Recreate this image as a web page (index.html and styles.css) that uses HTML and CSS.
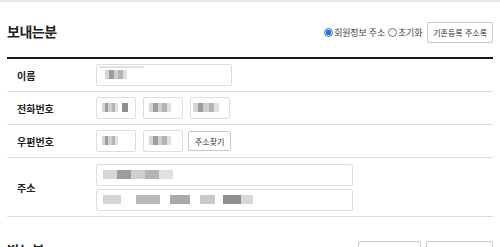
FILE: index.html
```html
<!DOCTYPE html>
<html lang="ko">
<head>
  <meta charset="UTF-8">
  <meta name="viewport" content="width=device-width, initial-scale=1.0">
  <title>주문서 작성</title>
  <link rel="stylesheet" href="styles.css">
</head>
<body>
  <div class="topbar"></div>
  <div class="container">

    <!-- 보내는분 -->
    <div class="section-head">
      <h2>보내는분</h2>
      <div class="head-tools">
        <label class="radio"><input type="radio" name="sender_addr" checked>회원정보 주소</label>
        <label class="radio"><input type="radio" name="sender_addr">초기화</label>
        <button type="button" class="btn">기존등록 주소록</button>
      </div>
    </div>

    <div class="form-table">
      <div class="row">
        <div class="label">이름</div>
        <div class="field">
          <div class="box w-name"><span class="blur b1"></span><span class="blur b2"></span></div>
        </div>
      </div>
      <div class="row">
        <div class="label">전화번호</div>
        <div class="field">
          <div class="box w-short"><span class="blur b3"></span><span class="blur b4"></span></div>
          <div class="box w-short"><span class="blur b5"></span></div>
          <div class="box w-short"><span class="blur b6"></span></div>
        </div>
      </div>
      <div class="row">
        <div class="label">우편번호</div>
        <div class="field">
          <div class="box w-short"><span class="blur b3"></span></div>
          <div class="box w-short"><span class="blur b5"></span></div>
          <button type="button" class="btn small">주소찾기</button>
        </div>
      </div>
      <div class="row tall">
        <div class="label">주소</div>
        <div class="field stack">
          <div class="box w-long"><span class="blur b7"></span></div>
          <div class="box w-long"><span class="blur b8"></span></div>
        </div>
      </div>
    </div>

    <!-- 받는분 -->
    <div class="section-head next">
      <h2>받는분</h2>
      <div class="head-tools">
        <button type="button" class="btn wide"></button>
        <button type="button" class="btn wider"></button>
      </div>
    </div>

  </div>
</body>
</html>
```

FILE: styles.css
```css
body {
  margin: 0;
  font-family: "Noto Sans CJK KR", "Noto Sans", sans-serif;
  color: #222;
  background: #fff;
}
.topbar {
  height: 2px;
  background: #e6e6e6;
}
.container {
  margin: 0 7px;
}
.section-head {
  display: flex;
  align-items: center;
  justify-content: space-between;
  height: 55px;
  border-bottom: 2px solid #1a1a1a;
}
.section-head h2 {
  margin: 0;
  padding-top: 2px;
  font-size: 14px;
  font-weight: 700;
  letter-spacing: -0.5px;
  color: #222;
}
.head-tools {
  display: flex;
  align-items: center;
  gap: 3px;
  padding-top: 6px;
}
.radio {
  display: flex;
  align-items: center;
  font-size: 9px;
  color: #444;
  letter-spacing: -0.2px;
}
.radio input {
  width: 9px;
  height: 9px;
  margin: 0 1px 0 0;
  accent-color: #1f6fd6;
}
.btn {
  height: 21px;
  padding: 0 5px;
  font-family: inherit;
  font-size: 8px;
  color: #333;
  background: #fff;
  border: 1px solid #c8c8c8;
  border-radius: 2px;
}
.head-tools .btn {
  margin-left: 2px;
}
.btn.small {
  height: 20px;
  margin-left: -2px;
  padding: 0 6px;
}
.form-table .row {
  display: flex;
  align-items: center;
  height: 32px;
  border-bottom: 1px solid #dcdcdc;
}
.form-table .row.tall {
  height: 58px;
}
.label {
  width: 79px;
  padding-left: 10px;
  font-size: 10px;
  font-weight: 700;
  color: #222;
}
.field {
  display: flex;
  align-items: center;
  gap: 7px;
}
.field.stack {
  flex-direction: column;
  align-items: flex-start;
  gap: 3px;
}
.box {
  position: relative;
  height: 20px;
  border: 1px solid #dedede;
  border-radius: 2px;
  background: #fff;
}
.w-name { width: 134px; }
.w-short { width: 38px; }
.w-long { width: 255px; }

/* mosaic over the blurred input values */
.blur {
  position: absolute;
  top: 5px;
  height: 9px;
  background: linear-gradient(90deg, #d6d6d6 0 20%, #9d9d9d 20% 40%, #cfcfcf 40% 60%, #b4b4b4 60% 80%, #e0e0e0 80%);
}
.b1 { left: 8px; width: 22px; }
.b2 { left: 2px; top: 1px; width: 45px; height: 2px; background: #e2e2e2; }
.b3 { left: 5px; width: 16px; }
.b4 { left: 25px; width: 6px; background: #8f8f8f; }
.b5 { left: 5px; width: 22px; }
.b6 { left: 2px; width: 26px; }
.b7 { left: 6px; width: 70px; }
.b8 { left: 6px; width: 150px; background: linear-gradient(90deg, #d4d4d4 0 12%, #fff 12% 22%, #b8b8b8 22% 38%, #fff 38% 45%, #a9a9a9 45% 58%, #fff 58% 65%, #c9c9c9 65% 75%, #fff 75% 80%, #8e8e8e 80% 92%, #d8d8d8 92%); }

.section-head.next {
  border-bottom: none;
  margin-top: 4px;
}
.btn.wide { width: 63px; }
.btn.wider { width: 67px; }
```
